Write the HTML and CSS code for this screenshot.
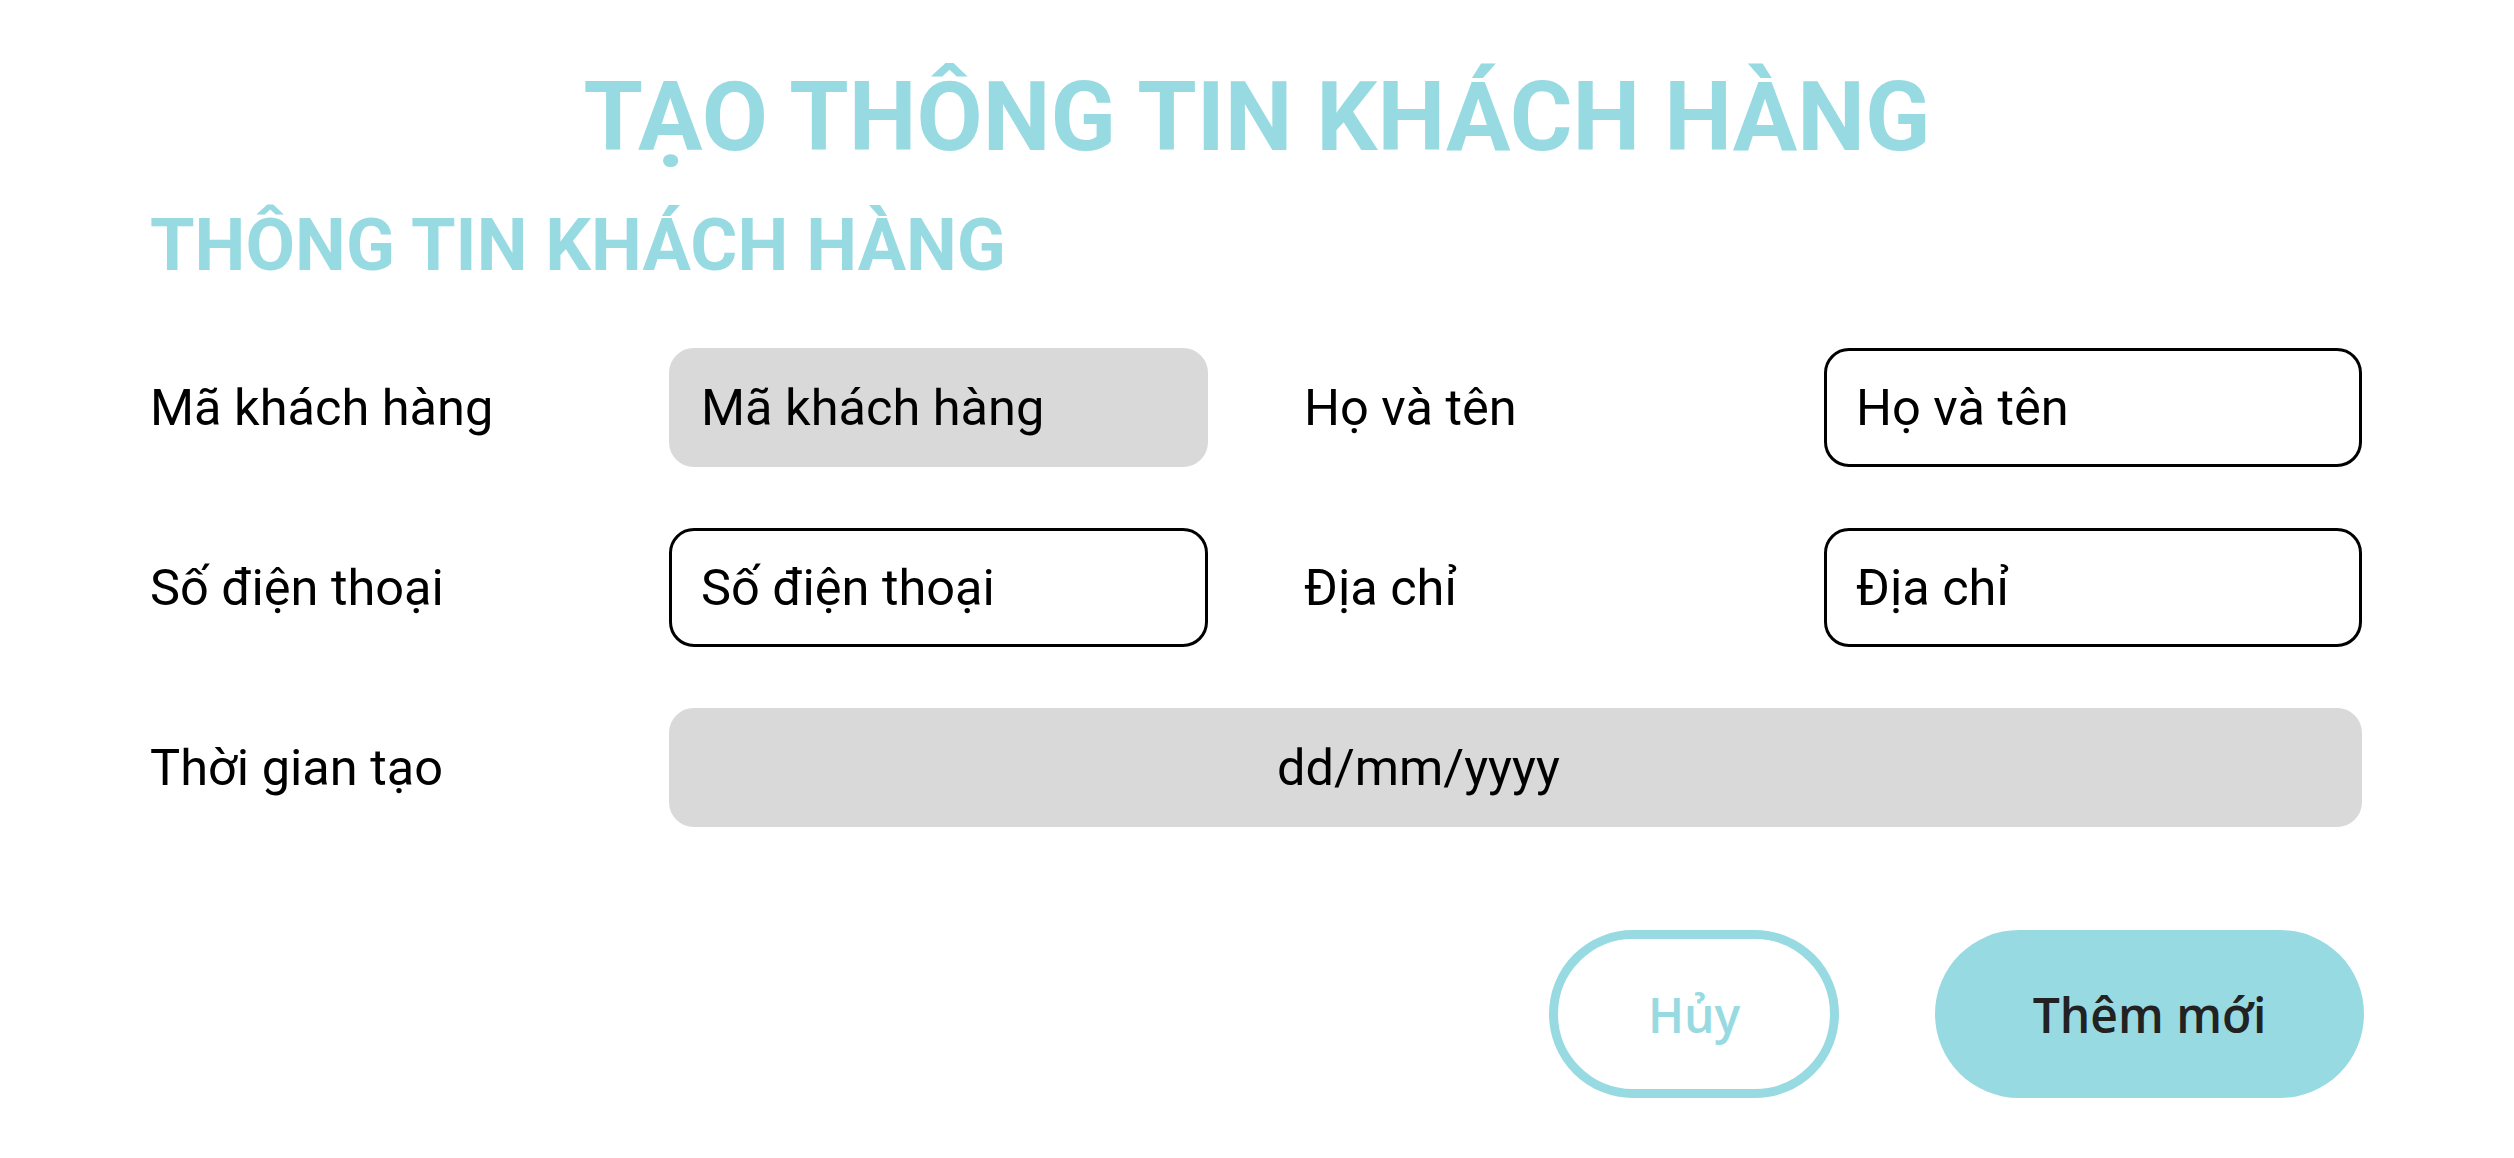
FILE: index.html
```html
<!DOCTYPE html>
<html lang="vi">
<head>
<meta charset="utf-8">
<title>Tạo thông tin khách hàng</title>
<link rel="stylesheet" href="styles.css">
</head>
<body>
<main class="page">
  <h1 class="title">TẠO THÔNG TIN KHÁCH HÀNG</h1>
  <h2 class="subtitle">THÔNG TIN KHÁCH HÀNG</h2>
  <form class="form">
    <label class="label">Mã khách hàng</label>
    <div class="field field--disabled">Mã khách hàng</div>
    <label class="label label--right">Họ và tên</label>
    <div class="field">Họ và tên</div>

    <label class="label">Số điện thoại</label>
    <div class="field">Số điện thoại</div>
    <label class="label label--right">Địa chỉ</label>
    <div class="field">Địa chỉ</div>

    <label class="label">Thời gian tạo</label>
    <div class="field field--disabled field--wide">dd/mm/yyyy</div>
  </form>
  <div class="actions">
    <button class="btn btn--outline" type="button">Hủy</button>
    <button class="btn btn--solid" type="button">Thêm mới</button>
  </div>
</main>
</body>
</html>
```
FILE: styles.css
```css
html, body {
  margin: 0;
  padding: 0;
  background: #ffffff;
}

.page {
  width: 2514px;
  box-sizing: border-box;
  padding: 69px 150px 0 150px;
  font-family: Roboto, "Noto Sans", sans-serif;
}

.title {
  margin: 0;
  text-align: center;
  font-family: Roboto, sans-serif;
  font-weight: 700;
  font-size: 96px;
  line-height: 96px;
  color: #98dae2;
}

.subtitle {
  margin: 45px 0 0 0;
  font-family: Roboto, sans-serif;
  font-weight: 700;
  font-size: 72px;
  line-height: 72px;
  color: #98dae2;
}

.form {
  margin-top: 66px;
  display: grid;
  grid-template-columns: 519px 539px 616px 538px;
  grid-auto-rows: 119px;
  row-gap: 61px;
  align-items: center;
}

.label {
  font-family: Roboto, sans-serif;
  font-size: 50.5px;
  color: #000000;
}

.label--right {
  padding-left: 96px;
}

.field {
  box-sizing: border-box;
  height: 119px;
  display: flex;
  align-items: center;
  padding-left: 29px;
  border: 3px solid #000000;
  border-radius: 25px;
  font-family: Roboto, sans-serif;
  font-size: 50.5px;
  color: #000000;
  background: #ffffff;
}

.field--disabled {
  background: #d9d9d9;
  border-color: #d9d9d9;
}

.field--wide {
  grid-column: 2 / 5;
  padding-left: 605px;
}

.actions {
  margin-top: 103px;
  display: flex;
  justify-content: flex-end;
  gap: 96px;
}

.btn {
  box-sizing: border-box;
  height: 168px;
  border-radius: 84px;
  font-family: "Open Sans", sans-serif;
  font-weight: 600;
  font-size: 48px;
  cursor: pointer;
  display: flex;
  align-items: center;
  justify-content: center;
  padding: 0;
}

.btn--outline {
  width: 290px;
  background: #ffffff;
  border: 9px solid #98dae2;
  color: #98dae2;
}

.btn--solid {
  width: 429px;
  background: #98dae2;
  border: none;
  color: #222222;
}
```
